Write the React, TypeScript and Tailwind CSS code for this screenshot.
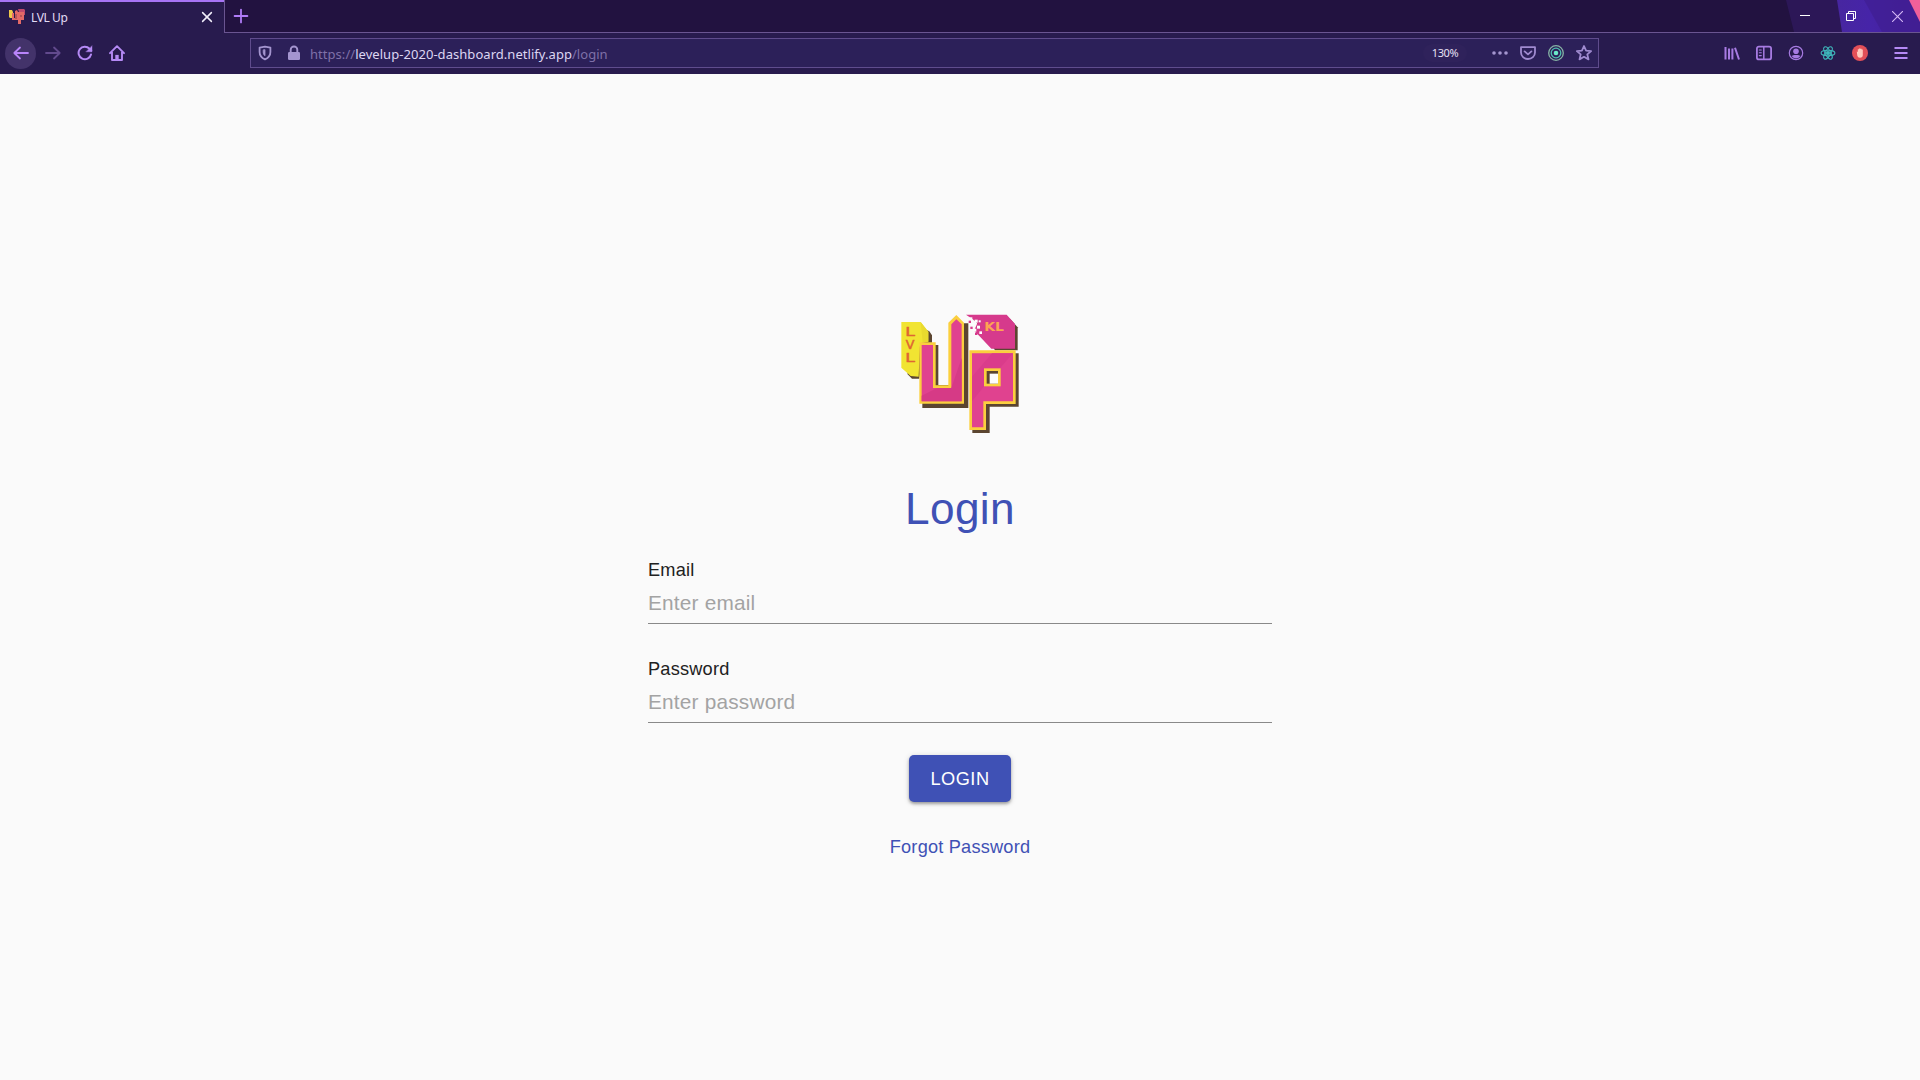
import React from "react";

const ui = "font-['Noto_Sans',sans-serif]";

function Logo() {
  return (
    <svg viewBox="0 0 420 435" className="h-[145px] w-[140px]">
      <polygon points="110,90 118,94 126,106 126,128 100,150 88,236 66,236 52,222" fill="#5b4530" />
      <polygon points="34,66 92,66 115,95 115,125 90,130 86,230 62,228 34,203" fill="#f1e432" />
      <polygon points="92,66 115,95 115,125 98,127" fill="#e9da2e" />
      <polygon points="252,56 360,56 383,82 383,151 315,151" fill="#5b4530" />
      <polygon points="228,44 350,44 375,72 375,146 304,146 268,108 252,92 262,70 248,58" fill="#d63a8c" />
      <g fill="#fcfcfc">
        <rect x="238" y="52" width="9" height="9" />
        <rect x="254" y="59" width="9" height="9" />
        <rect x="244" y="70" width="9" height="9" />
        <rect x="261" y="77" width="9" height="9" />
        <rect x="250" y="86" width="9" height="9" />
        <rect x="268" y="94" width="8" height="8" />
        <rect x="266" y="61" width="6" height="6" />
      </g>
      <g fill="#d63a8c">
        <rect x="236" y="62" width="7" height="7" />
        <rect x="241" y="80" width="7" height="7" />
        <rect x="255" y="98" width="7" height="7" />
      </g>
      <path d="M97 135h48v120h38V70h52v254H97z M247 160h139v160h-87v79h-52z" fill="#5b4530" />
      <path d="M88 127h49v129h38V68l24-23 23 23v243H88z" fill="#fbcf3e" />
      <path d="M95 135h34v129h55V73l15-15 16 15v231H95z" fill="#e0428f" />
      <path d="M95 304v-17l46-23h43l31-90v130z" fill="#d63a86" />
      <path d="M238 151h139v161h-89v78h-50z" fill="#fbcf3e" />
      <path d="M246 160h123v144h-89v78h-34z" fill="#e0428f" />
      <path d="M246 230l60-70h63l-86 98-37 46z" fill="#da3c8b" />
      <rect x="282" y="205" width="50" height="54" fill="#fbcf3e" />
      <rect x="290" y="213" width="34" height="38" fill="#5b4530" />
      <rect x="299" y="221" width="25" height="30" fill="#fcfcfc" />
      <g fontFamily="DejaVu Sans">
        <g fill="#df6633" stroke="#df6633" strokeWidth="1.5" fontSize="37">
          <text x="46" y="109" textLength="29" lengthAdjust="spacingAndGlyphs">L</text>
          <text x="47" y="147" textLength="26" lengthAdjust="spacingAndGlyphs">V</text>
          <text x="46" y="185" textLength="29" lengthAdjust="spacingAndGlyphs">L</text>
        </g>
        <text x="283" y="94" fill="#fda353" fontWeight="700" fontSize="38" textLength="59" lengthAdjust="spacingAndGlyphs">KL</text>
      </g>
    </svg>
  );
}

function Favicon() {
  return (
    <svg viewBox="0 0 16 16" className="size-4">
      <path d="M0 1h3l1 2v6H1L0 8z" fill="#eec84a" />
      <path d="M9 0h6l1 1v5h-5z" fill="#c04a6d" />
      <path d="M3 4h2v5h1V2l2-1 1 2h6v8h-3v4H9v-4H3z" fill="#e36a67" />
      <path d="M7 5v5M12 6v2" stroke="#8b4048" strokeWidth="1" />
    </svg>
  );
}

function Icon({ children, size = "size-4", color = "text-[#b58af5]" }: { children: React.ReactNode; size?: string; color?: string }) {
  return (
    <svg viewBox="0 0 16 16" fill="none" stroke="currentColor" strokeWidth="1.8" strokeLinecap="round" strokeLinejoin="round" className={`${size} ${color} shrink-0`}>
      {children}
    </svg>
  );
}

function TabStrip() {
  return (
    <div className="flex h-[33px]">
      <div className="flex w-[224px] items-center border-t-2 border-[#a774f5] bg-[#281b4e] pb-px pl-[9px] pr-[9px]">
        <Favicon />
        <span className="ml-[6px] flex-1 pt-px text-[12px] leading-4 tracking-[-0.4px] text-[#e3dcf5]">LVL Up</span>
        <Icon color="text-[#f1edfa]"><path d="M3.6 3.6l8.8 8.8M12.4 3.6l-8.8 8.8" strokeWidth="1.5" /></Icon>
      </div>
      <div className="relative flex flex-1 items-center justify-between border-b border-l border-[#6a5591] bg-[#221240] pl-2">
        <svg viewBox="0 0 140 32" className="absolute right-0 top-0 h-8 w-[140px]">
          <defs>
            <linearGradient id="violet" x1="0" x2="1">
              <stop offset="0" stopColor="#4726a0" />
              <stop offset=".4" stopColor="#4624a8" />
              <stop offset="1" stopColor="#461f95" />
            </linearGradient>
          </defs>
          <path d="M6 0h134v32H14z" fill="#2c1757" />
          <path d="M57 0h83v32H62z" fill="url(#violet)" />
          <path d="M84 0h56v32h-38z" fill="#3f1e92" opacity=".7" />
          <path d="M129 0h11v22z" fill="#f0609a" />
        </svg>
        <Icon color="text-[#b07cf8]"><path d="M8 1.6v12.8M1.6 8h12.8" strokeWidth="1.8" /></Icon>
        <div className="relative flex items-center gap-[36px] pr-[17px]">
          <svg viewBox="0 0 10 10" className="size-[10px]"><path d="M0 4.5h10" stroke="#fff" /></svg>
          <svg viewBox="0 0 10 10" fill="none" stroke="#fff" className="size-[10px]"><path d="M.5 2.5h7v7h-7zM2.5 2.5v-2h7v7h-2" /></svg>
          <svg viewBox="0 0 10 10" className="size-[11px]"><path d="M0 0l10 10M10 0L0 10" stroke="#d4b8f5" strokeWidth="1" /></svg>
        </div>
      </div>
    </div>
  );
}

function AddressBar() {
  return (
    <div className="ml-[125px] flex h-[30px] w-[1349px] shrink-0 items-center border border-[#5f4c8d] bg-[#2c2059] pl-[6px] pr-[6px]">
      <Icon color="text-[#a495cf]"><path d="M8 1.6l5.4 1v4.3c0 3.5-2.3 6-5.4 7.5-3.1-1.5-5.4-4-5.4-7.5V2.6z" /><path d="M8 5v5.8c-1.3-1-1.8-2.3-1.8-3.9V5.2z" fill="currentColor" strokeWidth=".8" /></Icon>
      <svg viewBox="0 0 16 16" className="ml-[13px] size-4 text-[#a495cf]">
        <rect x="2" y="7" width="12" height="8" rx="1.2" fill="currentColor" />
        <path d="M4.7 8V4.8a3.3 3.3 0 0 1 6.6 0V8" fill="none" stroke="currentColor" strokeWidth="1.9" />
      </svg>
      <span className="ml-[8px] flex-1 whitespace-nowrap pt-[2px] text-[13px] leading-[18px] tracking-[0.045px] text-[#7f70a8]">
        https://<span className="text-[#ddd6f2]">levelup-2020-dashboard.netlify.app</span>/login
      </span>
      <span className="flex h-[18px] w-[44px] items-center justify-center rounded-full bg-[#2f225b] pt-px text-[11px] tracking-[-0.4px] text-[#e6e0f5]">130%</span>
      <div className="ml-[25px] flex items-center gap-3">
        <svg viewBox="0 0 16 16" fill="#a495cf" className="size-4"><circle cx="2" cy="8" r="1.8" /><circle cx="8" cy="8" r="1.8" /><circle cx="14" cy="8" r="1.8" /></svg>
        <Icon color="text-[#a08bd0]"><path d="M1 2.2h14v5.3a7 6.5 0 0 1-14 0z" /><path d="M4.6 6.4L8 9.4l3.4-3" /></Icon>
        <svg viewBox="0 0 16 16" fill="none" className="size-4">
          <circle cx="8" cy="8" r="7.3" stroke="#86b3a5" strokeWidth="1.3" />
          <circle cx="8" cy="8" r="4.8" stroke="#4ebfae" strokeWidth="1.3" />
          <circle cx="8" cy="8" r="2.3" fill="#6be8c9" />
        </svg>
        <Icon color="text-[#a08bd0]"><path d="M8 1l2.1 4.6 5 .5-3.8 3.3 1.2 5L8 11.8l-4.5 2.6 1.2-5L.9 6.1l5-.5z" strokeWidth="1.8" /></Icon>
      </div>
    </div>
  );
}

function Toolbar() {
  return (
    <div className="flex h-[41px] items-center bg-[#281b4e] pb-px pl-[5px] pr-[11px]">
      <div className="flex size-[31px] shrink-0 items-center justify-center rounded-full bg-[#43336a]">
        <Icon color="text-[#b985fa]"><path d="M15 8H1.5M7 2.5L1.3 8 7 13.5" /></Icon>
      </div>
      <div className="ml-[9px] flex gap-4">
        <Icon color="text-[#624a8d]"><path d="M1 8h13.5M9 2.5L14.7 8 9 13.5" /></Icon>
        <Icon><path d="M14 9.5A6.3 6.3 0 1 1 12.5 3.7L14.2 5.5" strokeWidth="2" /><path d="M15 1v5.8H9.2z" fill="currentColor" strokeWidth=".4" /></Icon>
        <Icon><path d="M1 8.2L8 1.2l7 7M3 7v8h10V7" strokeWidth="1.9" /><path d="M8 14.5v-4.6" strokeWidth="3.4" strokeLinecap="butt" /></Icon>
      </div>
      <AddressBar />
      <div className="ml-[125px] flex flex-1 items-center gap-4">
        <Icon color="text-[#a77be2]"><path d="M1.5 2v12.5M5 3.5v11M8.4 3.5v11M11 2.8l4 11.7" strokeWidth="2" strokeLinecap="butt" /></Icon>
        <Icon color="text-[#a77be2]"><rect x=".9" y="1.6" width="14.2" height="12.8" rx="2" /><path d="M7.8 2v12" strokeWidth="1.5" /><path d="M3.3 5h2M3.3 7.8h2M3.3 10.6h2" strokeWidth="1.1" /></Icon>
        <Icon color="text-[#a77be2]"><circle cx="8" cy="8" r="6.7" strokeWidth="1.2" /><circle cx="8" cy="6.2" r="2.8" fill="currentColor" stroke="none" /><path d="M3.5 11c1-1.5 8-1.5 9 0a5.4 5.4 0 0 1-9 0z" fill="currentColor" stroke="none" /></Icon>
        <svg viewBox="0 0 16 16" fill="none" stroke="#3fb7bb" strokeWidth="1.1" className="size-4 shrink-0">
          <ellipse cx="8" cy="8" rx="6.9" ry="2.7" />
          <ellipse cx="8" cy="8" rx="6.9" ry="2.7" transform="rotate(60 8 8)" />
          <ellipse cx="8" cy="8" rx="6.9" ry="2.7" transform="rotate(120 8 8)" />
          <circle cx="8" cy="8" r="1.5" fill="#3fb7bb" />
        </svg>
        <svg viewBox="0 0 16 16" className="size-4 shrink-0">
          <circle cx="8" cy="8" r="8" fill="#e34f58" />
          <path d="M4.8 6.5l1 .6V4.2h1.1V3.5h1.4v.3h1.3v.8h1.2v5.6c0 1.6-1 2.5-2.8 2.5-1.6 0-2.2-.7-2.7-2z" fill="#ffc9bd" />
        </svg>
        <div className="flex flex-1 justify-end">
          <Icon color="text-[#b58af5]"><path d="M2.2 3h11.6M2.2 8h11.6M2.2 13h11.6" strokeWidth="1.9" /></Icon>
        </div>
      </div>
    </div>
  );
}

function Field({ label, placeholder, type }: { label: string; placeholder: string; type: string }) {
  return (
    <label className="block h-[99px]">
      <span className="block text-[18.2px] leading-[26px] tracking-[0.2px] text-[#212121]">{label}</span>
      <input
        type={type}
        placeholder={placeholder}
        className="block h-[41px] w-full border-b border-[#898989] text-[20.8px] tracking-[0.2px] outline-none placeholder:text-[#a3a3a3]"
      />
    </label>
  );
}

export default function App() {
  return (
    <div className="flex h-screen flex-col overflow-hidden bg-[#fafafa]">
      <header className={ui}>
        <TabStrip />
        <Toolbar />
      </header>
      <main className="flex flex-1 flex-col items-center pt-[226px] font-['Liberation_Sans',Arial,sans-serif]">
        <Logo />
        <h1 className="mt-[37px] text-[44.2px] leading-[54px] tracking-[0.35px] text-[#3f51b5]">Login</h1>
        <form className="mt-[21px] flex w-[624px] flex-col">
          <Field label="Email" placeholder="Enter email" type="email" />
          <Field label="Password" placeholder="Enter password" type="password" />
          <button type="button" className="h-[47px] w-[102px] self-center rounded-[5px] bg-[#3f51b5] pt-[2px] text-[18.2px] tracking-[0.52px] text-white shadow-[0_2px_3px_rgba(0,0,0,0.3),0_1px_6px_rgba(0,0,0,0.14)]">
            LOGIN
          </button>
          <a href="#" className="mt-[32px] self-center text-[18.2px] leading-[26px] tracking-[0.2px] text-[#3f51b5]">Forgot Password</a>
        </form>
      </main>
    </div>
  );
}
